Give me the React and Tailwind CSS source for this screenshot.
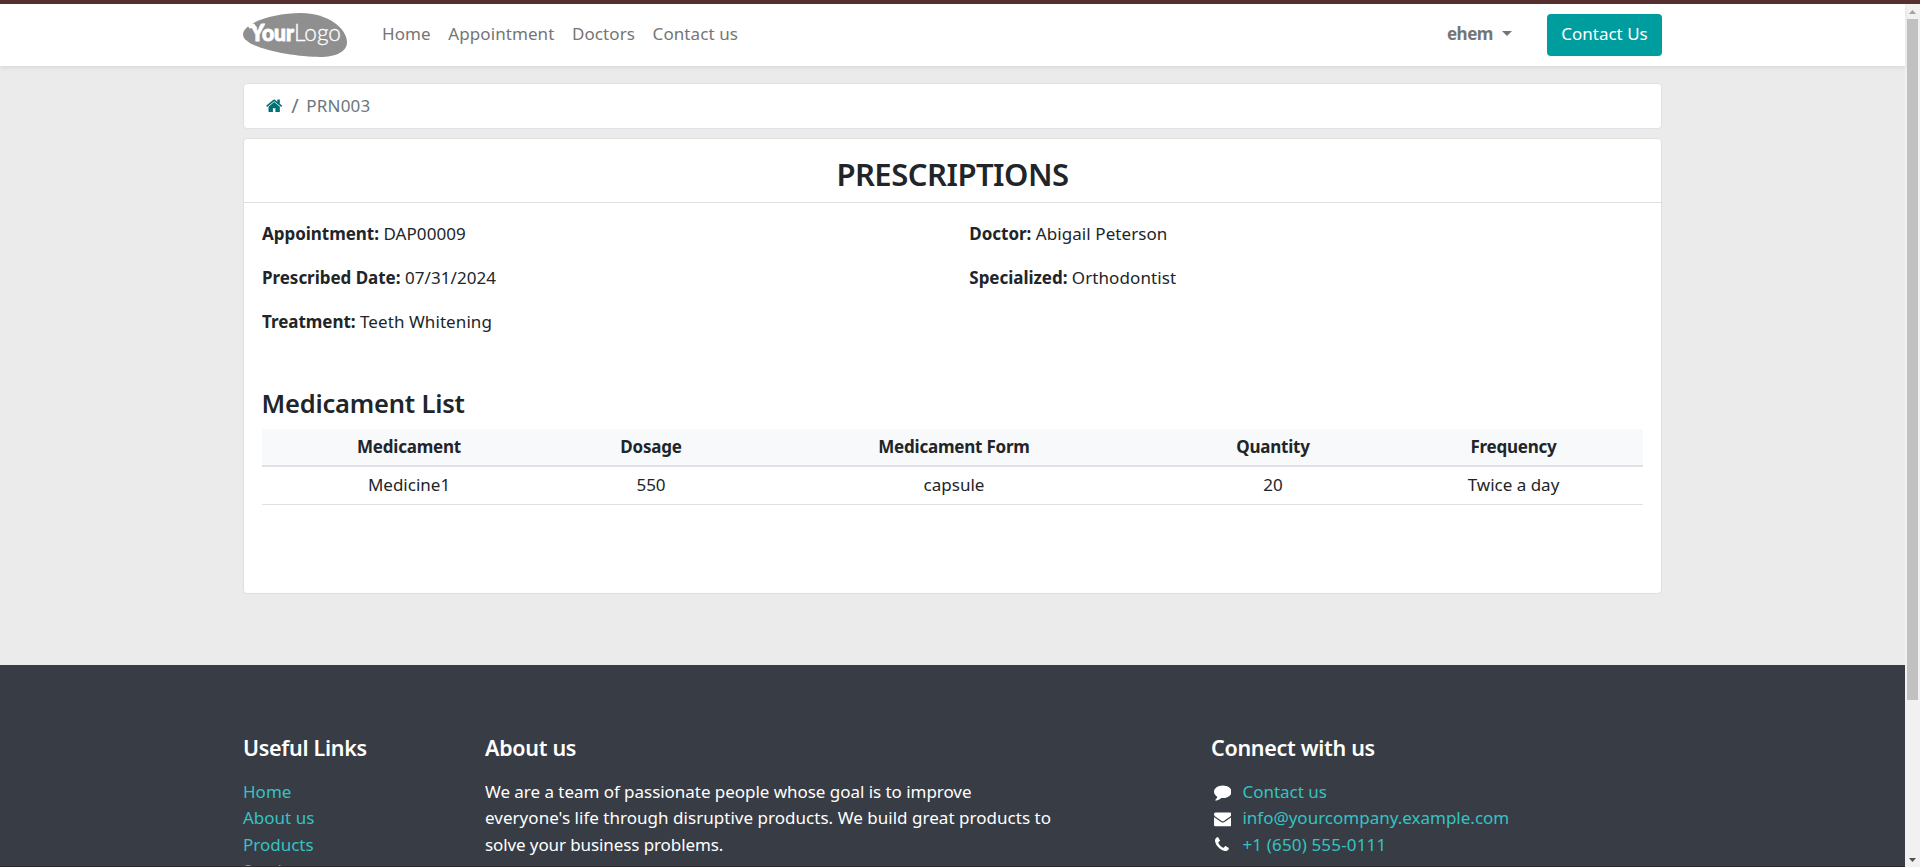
const ICONS = {
  home: {
    width: 1664,
    d: "M1408 992v480q0 26-19 45t-45 19H960v-384H704v384H320q-26 0-45-19t-19-45V992q0-1 .5-3t.5-3l575-474 575 474q1 2 1 6zm223-69l-62 74q-8 9-21 11h-3q-13 0-21-7L832 424 140 1001q-12 8-24 7-13-2-21-11l-62-74q-8-10-7-23.5T37 878l719-599q32-26 76-26t76 26l244 204V288q0-14 9-23t23-9h192q14 0 23 9t9 23v408l219 182q10 8 11 21.5t-7 23.5z",
  },
  comment: {
    width: 1792,
    d: "M1792 896q0 174-120 321.5t-326 233-450 85.5q-70 0-145-8-198 175-460 242-49 14-114 22-17 2-30.5-9t-17.5-29v-1q-3-4-.5-12t2-10 4.5-9.5l6-9 7-8.5 8-9q7-8 31-34.5t34.5-38 31-39.5 32.5-51 27-59 26-76q-157-89-247.5-220T0 896q0-130 71-248.5T262 443t286-136.5T896 256t348 50.5T1530 443t191 204.5T1792 896z",
  },
  envelope: {
    width: 1792,
    d: "M1792 710v794q0 66-47 113t-113 47H160q-66 0-113-47T0 1504V710q44 49 101 87 362 246 497 345 57 42 92.5 65.5t94.5 48 110 24.5h2q51 0 110-24.5t94.5-48T1194 1142q170-123 498-345 57-39 100-87zm0-294q0 79-49 151t-122 123q-376 261-468 325-10 7-42.5 31t-54 38.5-52 32.5-57.5 27-50 9h-2q-23 0-50-9t-57.5-27-52-32.5-54-38.5-42.5-31q-91-64-262-182.5T173 690q-62-42-117-115.5T1 438q0-78 41.5-130T160 256h1472q65 0 112.5 47t47.5 113z",
  },
  phone: {
    width: 1408,
    d: "M1408 1240q0 27-10 70.5t-21 68.5q-21 50-122 106-94 51-186 51-27 0-53-3.5t-57.5-12.5-47-14.5T856 1485t-49-18q-98-35-175-83-127-79-264-216T152 904q-48-77-83-175-3-9-18-49t-20.5-55.5-14.5-47T3.5 520 0 467q0-92 51-186 56-101 106-122 25-11 68.5-21t70.5-10q14 0 21 3 18 6 53 76 11 19 30 54t35 63.5 31 53.5q3 4 17.5 25t21.5 35.5 7 28.5q0 20-28.5 50t-62 55-62 53-28.5 46q0 9 5 22.5t8.5 20.5 14 24 11.5 19q76 137 174 235t235 174q2 1 19 11.5t24 14 20.5 8.5 22.5 5q18 0 46-28.5t53-62 55-62 50-28.5q14 0 28.5 7t35.5 21.5 25 17.5q25 15 53.5 31t63.5 35 54 30q70 35 76 53 3 7 3 21z",
  },
};

function Icon({ name, className }) {
  const { width, d } = ICONS[name];
  return (
    <svg viewBox={`0 0 ${width} 1792`} className={`h-[17.6px] fill-current ${className}`} aria-hidden="true">
      <path d={d} />
    </svg>
  );
}

function Logo() {
  return (
    <svg width="106" height="46" viewBox="0 0 106 46" role="img" aria-label="Your Logo">
      <path
        d="M0 22.5C0 11 30 1 58 1C84 1 104 16 104 30.5C104 40 92 45 77 45C50 45 0 36 0 22.5Z"
        fill="#8f8f8f"
      />
      <path d="M4 12.4l3.5-.8 3.5.6 3 3-1 3.5-3-2.7-3.5.6z" fill="#fff" />
      <text
        x="7.5"
        y="28.5"
        textLength="43.5"
        lengthAdjust="spacingAndGlyphs"
        className="fill-white stroke-white stroke-[0.9px] font-['Lato',sans-serif] text-[22px] font-black"
      >
        Your
      </text>
      <text x="51" y="28.5" textLength="47" lengthAdjust="spacingAndGlyphs" className="fill-white stroke-white stroke-[0.3px] font-['Lato',sans-serif] text-[22.5px] font-light">
        Logo
      </text>
    </svg>
  );
}

function Header() {
  return (
    <header className="z-10 flex h-[62px] shrink-0 items-center justify-between bg-white px-[243px] text-[#757575] shadow-[0_2px_4px_rgba(0,0,0,0.075)]">
      <div className="flex items-center">
        <Logo />
        <nav className="flex gap-[17.6px] pb-[1px] pl-[33px] tracking-[0.08px]">
          <a>Home</a>
          <a>Appointment</a>
          <a>Doctors</a>
          <a>Contact us</a>
        </nav>
      </div>
      <div className="flex items-center">
        <span className="pb-[1px] font-bold tracking-[-0.45px]">ehem</span>
        <svg width="10" height="5" viewBox="0 0 10 5" className="mb-[3px] ml-[9px] fill-current">
          <path d="M0 0h10L5 5z" />
        </svg>
        <button className="ml-[35px] h-[42px] w-[115px] rounded-[4px] bg-[#009d9f] pb-[1px] text-white">Contact Us</button>
      </div>
    </header>
  );
}

function Field({ label, value }) {
  return (
    <p>
      <strong className="font-bold tracking-[-0.03px]">{label}</strong> <span className="tracking-[0.08px]">{value}</span>
    </p>
  );
}

function MedicamentTable() {
  return (
    <table className="w-full table-fixed border-collapse text-center">
      <colgroup>
        <col className="w-[294px]" />
        <col className="w-[190px]" />
        <col className="w-[416px]" />
        <col className="w-[222px]" />
        <col />
      </colgroup>
      <thead>
        <tr className="h-[37px] border-b-2 border-[#dee2e6] bg-[#f8f9fb] tracking-[-0.22px]">
          <th>Medicament</th>
          <th>Dosage</th>
          <th>Medicament Form</th>
          <th>Quantity</th>
          <th>Frequency</th>
        </tr>
      </thead>
      <tbody>
        <tr className="h-[38px] border-b border-[#dee2e6]">
          <td>Medicine1</td>
          <td>550</td>
          <td>capsule</td>
          <td>20</td>
          <td>Twice a day</td>
        </tr>
      </tbody>
    </table>
  );
}

function Content() {
  return (
    <main className="h-[599px] shrink-0 px-[243px] pt-[17px]">
      <div className="flex h-[46px] items-center rounded-[4px] border border-[#dee2e6] bg-white pl-[22px]">
        <Icon name="home" className="text-[#017074]" />
        <span className="ml-[9px] text-[20px] text-[#6c757d]">/</span>
        <span className="ml-[7.5px] tracking-[0.2px] text-[#6c757d]">PRN003</span>
      </div>

      <section className="mt-[9px] h-[456px] rounded-[4px] border border-[#dfdfdf] bg-white">
        <h2 className="h-[64px] border-b border-[#dfdfdf] pt-[15px] text-center text-[31px] leading-[40px] font-[560] tracking-[-0.5px]">
          PRESCRIPTIONS
        </h2>
        <div className="px-[18px] pt-[17.6px]">
          <div className="grid grid-cols-[707.3px_1fr]">
            <div className="flex flex-col gap-[17.6px]">
              <Field label="Appointment:" value="DAP00009" />
              <Field label="Prescribed Date:" value="07/31/2024" />
              <Field label="Treatment:" value="Teeth Whitening" />
            </div>
            <div className="flex flex-col gap-[17.6px]">
              <Field label="Doctor:" value="Abigail Peterson" />
              <Field label="Specialized:" value="Orthodontist" />
            </div>
          </div>
          <h3 className="mt-[52px] mb-[10px] -ml-[0.5px] text-[25.5px] leading-[32px] font-[560] tracking-[-0.2px]">Medicament List</h3>
          <MedicamentTable />
        </div>
      </section>
    </main>
  );
}

function FooterHeading({ children }) {
  return <h5 className="mb-[14.7px] text-[21.5px] leading-[32px] font-[560] tracking-[-0.3px]">{children}</h5>;
}

function ContactRow({ icon, children }) {
  return (
    <li className="flex items-center">
      <span className="mr-[8.8px] flex w-[22.6px] justify-center">
        <Icon name={icon} className="text-white" />
      </span>
      <a className="text-[#35c3c1]">{children}</a>
    </li>
  );
}

function Footer() {
  return (
    <footer className="grid min-h-0 flex-1 grid-cols-[242px_726px_1fr] content-start overflow-hidden border-b border-[#2b2a33] bg-[#383c45] pt-[67px] pl-[243px] text-white">
      <div>
        <FooterHeading>Useful Links</FooterHeading>
        <ul className="text-[#35c3c1]">
          <li>Home</li>
          <li>About us</li>
          <li>Products</li>
          <li>Services</li>
        </ul>
      </div>
      <div>
        <FooterHeading>About us</FooterHeading>
        <p>
          <span className="tracking-[-0.04px]">We are a team of passionate people whose goal is to improve</span>
          <br />
          <span className="tracking-[0.03px]">everyone's life through disruptive products. We build great products to</span>
          <br />
          <span className="tracking-[-0.1px]">solve your business problems.</span>
        </p>
      </div>
      <div>
        <FooterHeading>Connect with us</FooterHeading>
        <ul>
          <ContactRow icon="comment">Contact us</ContactRow>
          <ContactRow icon="envelope">info@yourcompany.example.com</ContactRow>
          <ContactRow icon="phone">
            <span className="tracking-[0.16px]">+1 (650) 555-0111</span>
          </ContactRow>
        </ul>
      </div>
    </footer>
  );
}

function ScrollBar() {
  return (
    <div className="flex w-[15px] shrink-0 flex-col items-center justify-between bg-[#f1f1f1]">
      <div className="flex flex-col items-center">
        <svg width="7" height="4" viewBox="0 0 7 4" className="mt-[6px] fill-[#a3a3a3]">
          <path d="M3.5 0L7 4H0z" />
        </svg>
        <div className="mt-[5px] h-[681px] w-[11px] bg-[#c1c1c1]" />
      </div>
      <svg width="7" height="4" viewBox="0 0 7 4" className="mb-[5px] fill-[#505050]">
        <path d="M0 0h7L3.5 4z" />
      </svg>
    </div>
  );
}

export default function App() {
  return (
    <div className="flex h-[867px] w-full flex-col overflow-hidden bg-[#ebebeb] font-['Noto_Sans',sans-serif] text-[17px] leading-[26.4px] text-[#212529]">
      <div className="h-[4px] shrink-0 bg-[#572f30]" />
      <div className="flex min-h-0 flex-1">
        <div className="flex min-w-0 flex-1 flex-col">
          <Header />
          <Content />
          <Footer />
        </div>
        <ScrollBar />
      </div>
    </div>
  );
}
